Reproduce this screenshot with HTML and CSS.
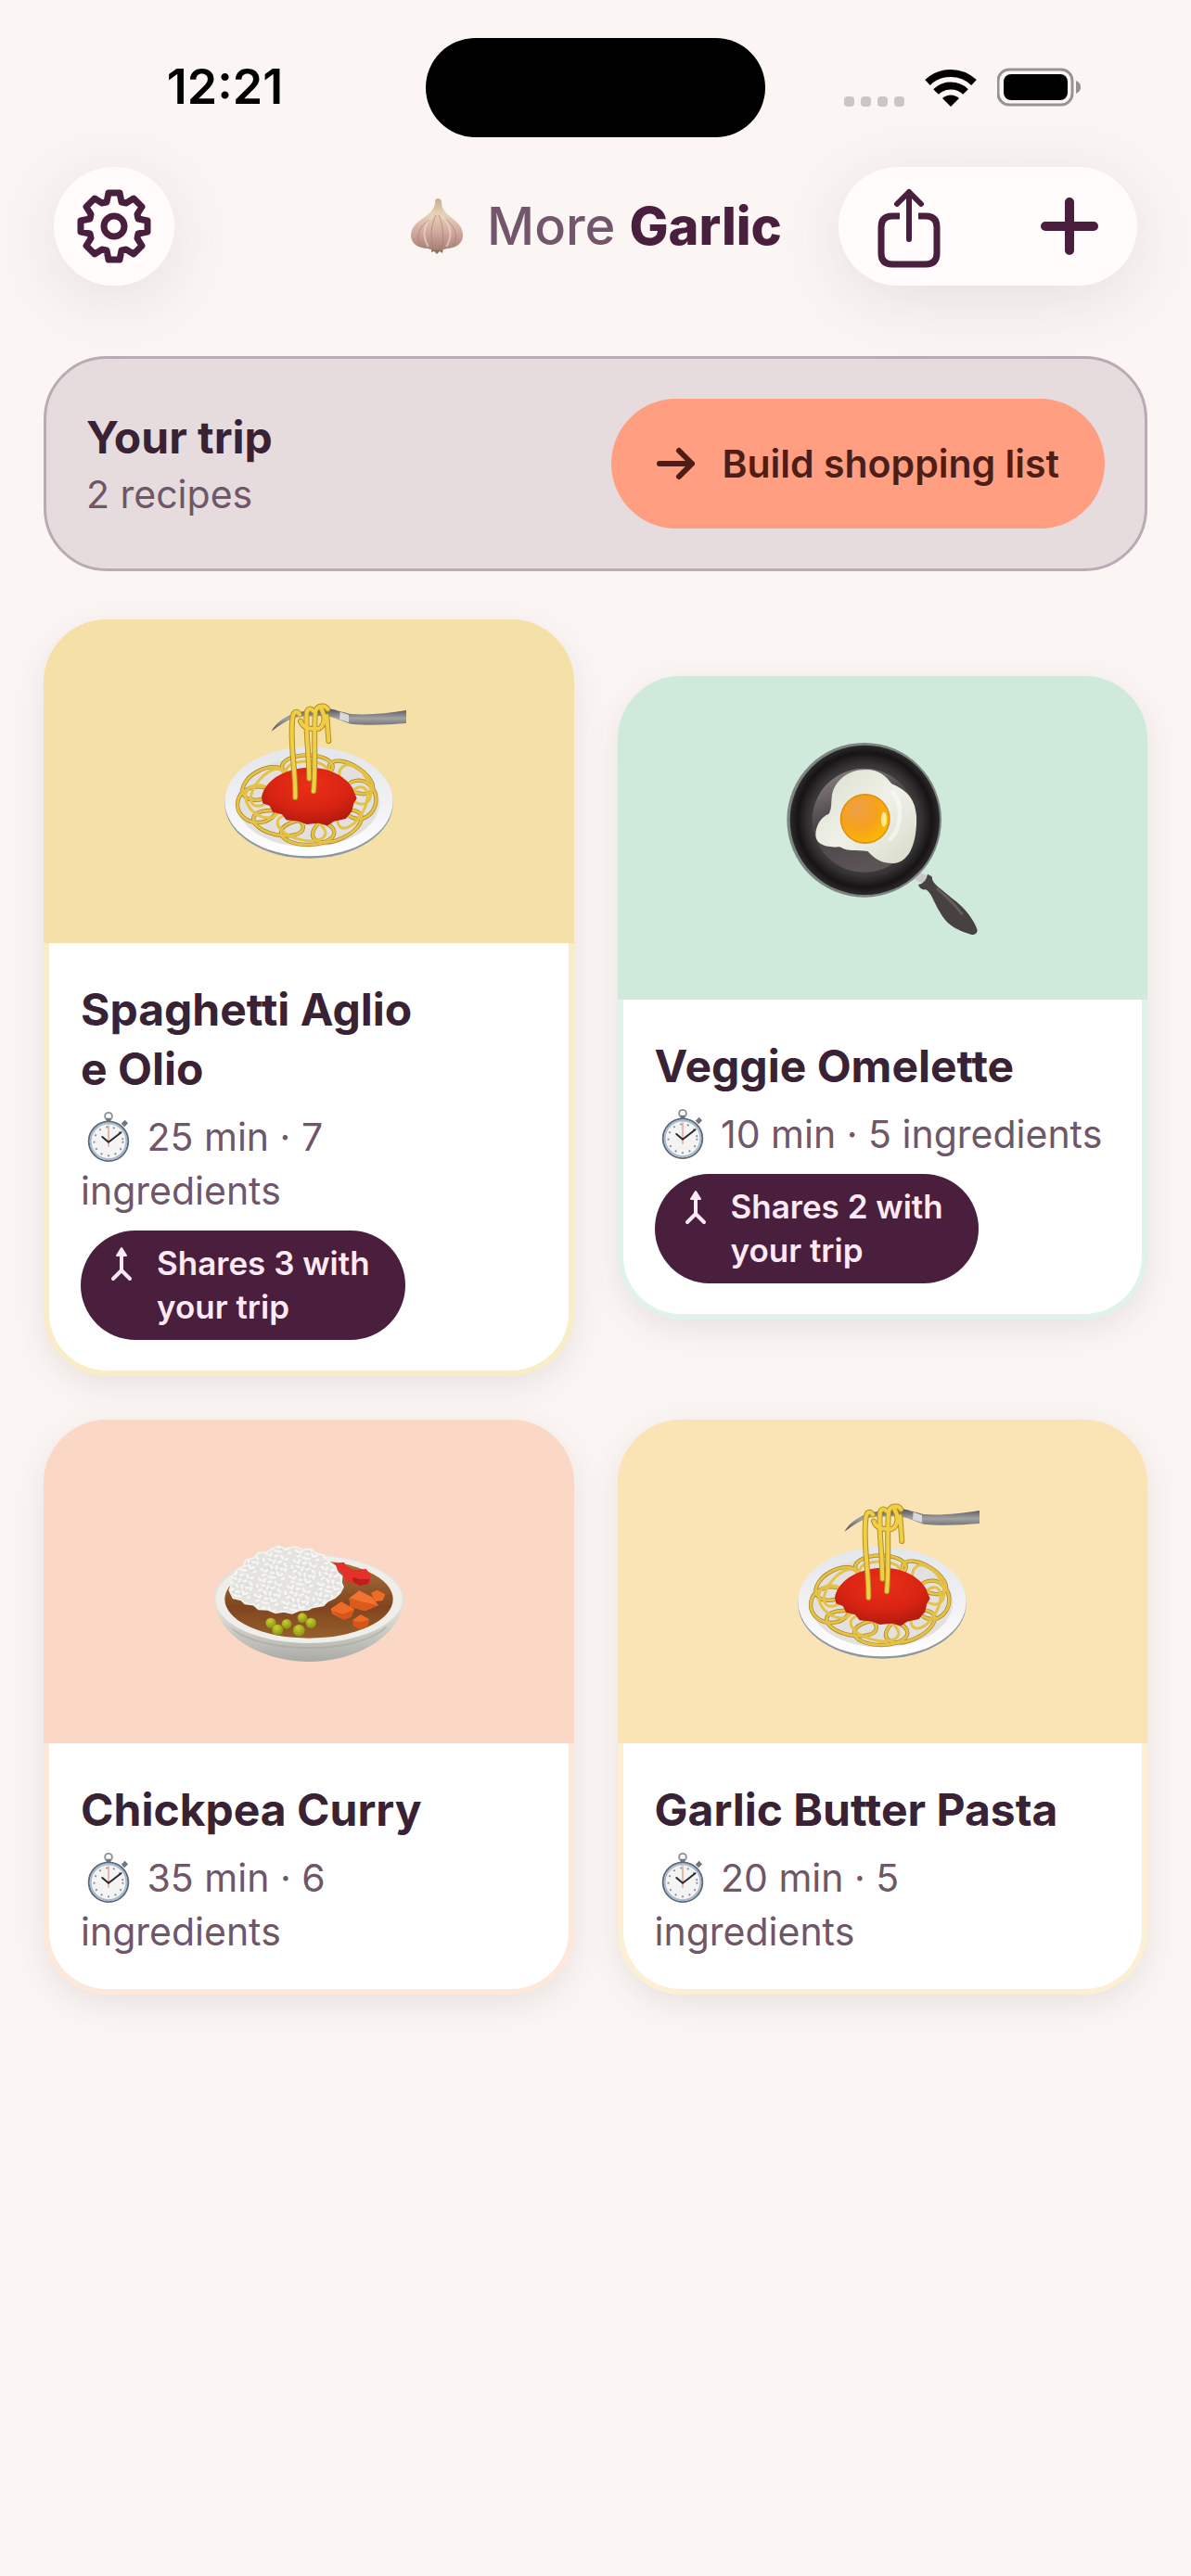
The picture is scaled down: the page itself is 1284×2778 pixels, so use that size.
FILE: index.html
```html
<!DOCTYPE html>
<html lang="en">
<head>
    <meta charset="UTF-8">
    <meta name="viewport" content="width=device-width, initial-scale=1.0">
    <title>More Garlic</title>
    <link rel="stylesheet" href="styles.css">
</head>
<body>

<!-- shared drawings -->
<svg class="defs" aria-hidden="true">
    <defs>
        <linearGradient id="plate" x1="0" y1="0" x2="0" y2="1">
            <stop offset="0" stop-color="#e3e6ea"/>
            <stop offset="0.5" stop-color="#f1f1f4"/>
            <stop offset="1" stop-color="#ffffff"/>
        </linearGradient>
        <radialGradient id="sauce" cx="0.5" cy="0.3" r="0.7">
            <stop offset="0" stop-color="#ea2f17"/>
            <stop offset="0.6" stop-color="#d92413"/>
            <stop offset="1" stop-color="#b01a0e"/>
        </radialGradient>
        <linearGradient id="steel" x1="0" y1="0" x2="0" y2="1">
            <stop offset="0" stop-color="#4b4b4e"/>
            <stop offset="0.45" stop-color="#a3a3a6"/>
            <stop offset="1" stop-color="#4a4a4d"/>
        </linearGradient>
        <radialGradient id="pan">
            <stop offset="0.6" stop-color="#4a4647"/>
            <stop offset="0.75" stop-color="#363334"/>
            <stop offset="0.9" stop-color="#151314"/>
            <stop offset="1" stop-color="#2c2a2b"/>
        </radialGradient>
        <linearGradient id="pan-floor" x1="0" y1="0" x2="0.4" y2="1">
            <stop offset="0" stop-color="#958b8c"/>
            <stop offset="0.5" stop-color="#4a4446"/>
            <stop offset="1" stop-color="#5c5456"/>
        </linearGradient>
        <radialGradient id="yolk" cx="0.35" cy="0.3" r="0.8">
            <stop offset="0" stop-color="#eda04b"/>
            <stop offset="0.5" stop-color="#f6a11c"/>
            <stop offset="1" stop-color="#fcbb00"/>
        </radialGradient>
        <linearGradient id="white" x1="0" y1="0" x2="1" y2="1">
            <stop offset="0" stop-color="#d9dccb"/>
            <stop offset="0.5" stop-color="#f0f2e9"/>
            <stop offset="1" stop-color="#d6dac8"/>
        </linearGradient>
        <linearGradient id="bowl" x1="0" y1="0" x2="0" y2="1">
            <stop offset="0.5" stop-color="#e3e1da"/>
            <stop offset="0.85" stop-color="#bdbdb8"/>
            <stop offset="1" stop-color="#a9a9a5"/>
        </linearGradient>
        <linearGradient id="curry" x1="0" y1="0" x2="0" y2="1">
            <stop offset="0" stop-color="#a9743a"/>
            <stop offset="0.6" stop-color="#80451f"/>
            <stop offset="1" stop-color="#96602c"/>
        </linearGradient>
        <radialGradient id="pea" cx="0.4" cy="0.3" r="0.7">
            <stop offset="0" stop-color="#c9cf2f"/>
            <stop offset="1" stop-color="#8b9212"/>
        </radialGradient>
        <linearGradient id="bulb" x1="0" y1="0" x2="0" y2="1">
            <stop offset="0" stop-color="#c9ad8b"/>
            <stop offset="0.3" stop-color="#e6d3b7"/>
            <stop offset="0.65" stop-color="#d3aa9f"/>
            <stop offset="1" stop-color="#a67f76"/>
        </linearGradient>
        <pattern id="rice" width="94" height="86" patternUnits="userSpaceOnUse" patternTransform="rotate(14)">
            <rect width="94" height="86" fill="#e4e3e0"/>
            <g stroke-width="7" stroke-linecap="round">
                <path stroke="#f8f8f7" d="M8 8l8 5M27 5l-3 10M40 12l9-4M61 5l6 8M82 9l-7 6M6 28l4 8M22 25l9 2M43 24l-2 10M55 29l9-5M76 27l8 6M16 46l8-5M34 44l7 7M53 42l3 9M68 48l9-3M86 44l-3 9M7 62l9 4M28 60l-6 8M41 67l9-2M60 60l5 8M78 62l-8 7M17 80l8-3M36 79l8 2M57 78l-8 2M80 78l6-4"/>
                <path stroke="#cfcdc9" stroke-width="2" d="M17 18l7 3M34 17l5 4M53 15l2 7M70 19l6 2M13 40l-4 6M34 35l-6 3M48 37l5-2M66 36l6 4M27 53l7 3M46 55l5 3M61 54l5-2M77 55l7 2M15 72l7 1M33 71l3 4M53 72l5 1M70 74l6-1"/>
            </g>
        </pattern>

        <symbol id="spaghetti" viewBox="84 51 630 630">
            <ellipse cx="399" cy="436" rx="272" ry="178" fill="#8d98a5"/>
            <ellipse cx="399" cy="430" rx="272" ry="177" fill="url(#plate)"/>
            <ellipse cx="396" cy="432" rx="232" ry="145" fill="#e3e0de"/>
            <g fill="none" stroke="#a9821f" stroke-width="13">
                <ellipse cx="394" cy="318" rx="82" ry="38"/>
                <ellipse cx="255" cy="372" rx="76" ry="45" transform="rotate(-28 255 372)"/>
                <ellipse cx="234" cy="440" rx="66" ry="58"/>
                <ellipse cx="535" cy="352" rx="80" ry="38" transform="rotate(32 535 352)"/>
                <ellipse cx="560" cy="424" rx="56" ry="62"/>
                <ellipse cx="300" cy="500" rx="82" ry="38" transform="rotate(12 300 500)"/>
                <ellipse cx="395" cy="530" rx="86" ry="40"/>
                <ellipse cx="490" cy="510" rx="85" ry="42" transform="rotate(-25 490 510)"/>
            </g>
            <g fill="none" stroke="#e4c147" stroke-width="9">
                <ellipse cx="394" cy="318" rx="82" ry="38"/>
                <ellipse cx="392" cy="330" rx="66" ry="30"/>
                <ellipse cx="255" cy="372" rx="76" ry="45" transform="rotate(-28 255 372)"/>
                <ellipse cx="265" cy="385" rx="72" ry="36" transform="rotate(-50 265 385)"/>
                <ellipse cx="234" cy="440" rx="66" ry="58"/>
                <ellipse cx="250" cy="430" rx="62" ry="45" transform="rotate(40 250 430)"/>
                <ellipse cx="535" cy="352" rx="80" ry="38" transform="rotate(32 535 352)"/>
                <ellipse cx="548" cy="375" rx="70" ry="42" transform="rotate(58 548 375)"/>
                <ellipse cx="560" cy="424" rx="56" ry="62"/>
                <ellipse cx="540" cy="450" rx="74" ry="36" transform="rotate(-60 540 450)"/>
                <ellipse cx="300" cy="500" rx="82" ry="38" transform="rotate(12 300 500)"/>
                <ellipse cx="395" cy="530" rx="86" ry="40"/>
                <ellipse cx="375" cy="515" rx="80" ry="38" transform="rotate(16 375 515)"/>
                <ellipse cx="490" cy="510" rx="85" ry="42" transform="rotate(-25 490 510)"/>
            </g>
            <path fill="url(#sauce)" d="M246 418C252 370 310 322 400 320c70 0 120 32 140 66l14 34-10 16-6 26-20 24-38 8-20 14-30-8-38 4-26-10-40-4-14-18-30-8-10-20-22-8z"/>
            <path fill="url(#steel)" d="M277 203c20-34 52-52 90-62l80-14c20 0 50 12 86 20 60 4 120-2 181-12v42c-50 4-120 8-180 2-30-8-50-22-86-26l-80 2c-40 8-64 30-91 48z"/>
            <path fill="#d9d9dc" d="M500 140l28 10v24l-30-10z"/>
            <g fill="none" stroke="#b58f22" stroke-width="18" stroke-linecap="round">
                <path d="M355 417c2-90-20-180-8-262 4-20 16-18 22-6"/>
                <path d="M400 356c0-80-12-150-8-214 4-14 14-14 20-6"/>
                <path d="M414 397c8-70 0-190 6-258 6-22 32-22 40-8"/>
                <path d="M372 170c10 28 40 26 60 24M438 190c18-20 10-44 0-62M463 234l-6-80"/>
            </g>
            <g fill="none" stroke="#f0cf48" stroke-width="12" stroke-linecap="round">
                <path d="M355 417c2-90-20-180-8-262 4-20 16-18 22-6"/>
                <path d="M400 356c0-80-12-150-8-214 4-14 14-14 20-6"/>
                <path d="M414 397c8-70 0-190 6-258 6-22 32-22 40-8"/>
                <path d="M372 170c10 28 40 26 60 24M438 190c18-20 10-44 0-62M463 234l-6-80"/>
            </g>
        </symbol>

        <symbol id="stopwatch" viewBox="0 0 60 60">
            <circle cx="30" cy="7" r="4" fill="none" stroke="#8d9299" stroke-width="2"/>
            <path stroke="#6f767e" stroke-width="5" d="M30 9v5M46 17l4-4"/>
            <circle cx="30" cy="35" r="22" fill="#f4f4f5" stroke="#5d6976" stroke-width="2"/>
            <circle cx="30" cy="35" r="20" fill="none" stroke="#a9bacd" stroke-width="2"/>
            <circle cx="30" cy="35" r="16" fill="none" stroke="#8d8d90" stroke-width="2" stroke-dasharray="2 6"/>
            <path stroke="#e2755d" stroke-width="1" d="M30 17v24"/>
            <path stroke="#26282b" stroke-width="2" stroke-linecap="round" d="M30 36L44 25M30 36l-7-6"/>
        </symbol>

        <symbol id="merge" viewBox="0 0 24 38">
            <path fill="currentColor" stroke="currentColor" stroke-width="2" stroke-linejoin="round" d="M12 2l5 8H7z"/>
            <path fill="none" stroke="currentColor" stroke-width="4" stroke-linecap="round" stroke-linejoin="round" d="M12 9v17L3 35M12 26l9 9"/>
        </symbol>
    </defs>
</svg>

<div class="status-bar">
    <div class="time">12:21</div>
    <div class="island"></div>
    <div class="status-icons">
        <div class="signal"><i></i><i></i><i></i><i></i></div>
        <svg class="wifi" viewBox="0 0 56 42">
            <g fill="none" stroke="#000" stroke-width="8">
                <path d="M3 16a36 36 0 0 1 50 0"/>
                <path d="M12 26a23 23 0 0 1 32 0"/>
            </g>
            <path d="M28 42l-9-9a13 13 0 0 1 18 0z"/>
        </svg>
        <svg class="battery" viewBox="0 0 90 42">
            <rect x="1" y="2" width="80" height="38" rx="12" fill="none" stroke="#979391" stroke-width="3"/>
            <rect x="7" y="7" width="69" height="28" rx="8"/>
            <path fill="#979391" d="M85 14c7 3 7 11 0 14z"/>
        </svg>
    </div>
</div>

<header class="top-bar">
    <button class="round-btn" aria-label="Settings">
        <svg class="gear" viewBox="-40 -40 80 80">
            <g fill="none" stroke="currentColor" stroke-width="7" stroke-linejoin="round">
                <path d="M-8 -26L-6 -36L6 -36L8 -26L13 -25L21 -30L30 -21L25 -13L26 -8L36 -6L36 6L26 8L25 13L30 21L21 30L13 25L8 26L6 36L-6 36L-8 26L-13 25L-21 30L-30 21L-25 13L-26 8L-36 6L-36 -6L-26 -8L-25 -13L-30 -21L-21 -30L-13 -25Z"/>
                <circle r="11"/>
            </g>
        </svg>
    </button>
    <h1 class="brand">
        <svg class="garlic" viewBox="0 0 60 60">
            <path fill="#8c7464" d="M24 52h13l-1 7-3-2-3 3-3-3-3 1z"/>
            <path fill="url(#bulb)" d="M31 0c2 0 4 1 4 4 0 8 5 12 11 17 8 6 12 11 12 19 0 9-9 14-17 14-6 2-15 2-21 0C11 54 2 49 2 40c0-8 5-13 12-18 7-5 14-10 14-18 0-3 1-4 3-4z"/>
            <path fill="none" stroke="#f1dcd2" stroke-width="2" opacity="0.6" d="M26 18C15 28 14 42 21 52M34 18c12 10 13 24 6 34"/>
            <path fill="none" stroke="#a57a71" stroke-width="1" opacity="0.6" d="M29 18c-6 12-6 26-3 36M32 18c5 12 6 26 3 36M22 23C9 32 7 42 13 51M40 23c11 9 13 19 8 28"/>
        </svg>
        <span>More <strong>Garlic</strong></span>
    </h1>
    <div class="actions">
        <button class="action" aria-label="Share">
            <svg class="share" viewBox="0 0 68 86">
                <g fill="none" stroke="currentColor" stroke-width="7" stroke-linecap="round" stroke-linejoin="round">
                    <path stroke-linecap="butt" d="M24 30h-8Q4 30 4 42v28q0 12 12 12h36q12 0 12-12V42q0-12-12-12h-8"/>
                    <path stroke-width="6" d="M34 55V4M21 17L34 4l13 13"/>
                </g>
            </svg>
        </button>
        <button class="action" aria-label="Add recipe">
            <svg class="plus" viewBox="0 0 62 62">
                <path stroke="currentColor" stroke-width="10" stroke-linecap="round" d="M31 5v52M5 31h52"/>
            </svg>
        </button>
    </div>
</header>

<main>
    <section class="trip">
        <div>
            <h2 class="trip-title">Your trip</h2>
            <p class="trip-count">2 recipes</p>
        </div>
        <button class="build-btn">
            <svg class="arrow" viewBox="0 0 42 36">
                <path fill="none" stroke="currentColor" stroke-width="6" stroke-linecap="round" stroke-linejoin="round" d="M3 18h35M24 4l14 14-14 14"/>
            </svg>
            Build shopping list
        </button>
    </section>

    <section class="recipes">
        <article class="card yellow">
            <div class="cover"><svg class="food"><use href="#spaghetti"/></svg></div>
            <div class="card-body">
                <h3>Spaghetti Aglio<br>e Olio</h3>
                <p class="meta"><svg class="watch"><use href="#stopwatch"/></svg> 25 min · 7<br>ingredients</p>
                <div class="shares"><svg class="merge"><use href="#merge"/></svg><span>Shares 3 with<br>your trip</span></div>
            </div>
        </article>

        <article class="card green">
            <div class="cover">
                <svg class="food" viewBox="138 117 630 630">
                    <path stroke="#c9c9c9" stroke-width="28" d="M562 552l34 16"/>
                    <path fill="#484142" d="M570 582q26-6 30-34l14 8c0 24 24 34 62 68 48 34 74 74 84 102 4 14-12 22-24 16-40-12-74-30-94-68-24-36-28-66-48-76-12 2-20-4-24-16z"/>
                    <path fill="none" stroke="#665d5f" stroke-width="8" stroke-linecap="round" d="M632 596c30 26 58 50 78 80"/>
                    <circle cx="395" cy="373" r="250" fill="#7d8581"/>
                    <circle cx="397" cy="373" r="242" fill="url(#pan)"/>
                    <circle cx="395" cy="374" r="168" fill="url(#pan-floor)"/>
                    <path fill="url(#white)" d="M290 300c4-50 50-90 110-90 46 0 66 22 84 46 46 20 76 46 80 104 2 60-10 140-66 152-50 6-74-20-92-38-40-6-60 4-90-14-40 2-78-6-78-40 0-30 20-60 42-66 10-16 8-34 10-54z"/>
                    <path fill="none" stroke="#f8faf3" stroke-width="14" opacity="0.7" stroke-linecap="round" d="M490 285c30 40 26 110-10 150"/>
                    <circle cx="398" cy="369" r="81" fill="#e08f12"/>
                    <circle cx="398" cy="369" r="76" fill="url(#yolk)"/>
                    <ellipse cx="459" cy="371" rx="9" ry="24" fill="#ffe98a"/>
                </svg>
            </div>
            <div class="card-body">
                <h3>Veggie Omelette</h3>
                <p class="meta"><svg class="watch"><use href="#stopwatch"/></svg> 10 min · 5 ingredients</p>
                <div class="shares"><svg class="merge"><use href="#merge"/></svg><span>Shares 2 with<br>your trip</span></div>
            </div>
        </article>

        <article class="card peach">
            <div class="cover">
                <svg class="food" viewBox="84 -59 630 630">
                    <path fill="url(#bowl)" d="M93 310C96 220 220 168 400 168s304 66 306 140c0 110-140 206-306 206S96 420 93 310z"/>
                    <path fill="none" stroke="#a6a6a2" stroke-width="5" opacity="0.6" d="M150 406c90 80 400 90 500-4"/>
                    <ellipse cx="399" cy="312" rx="302" ry="142" fill="#efeee9"/>
                    <ellipse cx="399" cy="312" rx="272" ry="126" fill="url(#curry)"/>
                    <path fill="#e6302a" d="M478 196l34-4 10 14 22 12 40-4 16 20-4 26-30 10-26-12-22-4-14-30-22-14z"/>
                    <path fill="#b91f1c" d="M540 240l26 8 30-2-6 16-26 6-22-12z"/>
                    <path fill="url(#rice)" stroke="#f3f2f0" stroke-width="5" stroke-linejoin="round" d="M142 282l8-22-4-12 18-30 24-12 6-20 28-8 14-16 26-2 18-12 22-8 20 8 34-6 24 10 26-2 18 14 24 6 14 20 22 14 8 22 14 12-2 20 6 14-10 20-18 16-22 10-14 14-34 6-16 8-28 2-24 10-26-6-28 4-24-10-30-2-16-14-28-4-12-12-26-6-8-16z"/>
                    <path fill="#f0742f" d="M530 308l32-24 40 20 22 28-44 18-48-14z"/>
                    <path fill="#d95a1b" d="M530 308l40 12 54 12-44 18-48-14z"/>
                    <path fill="#ee6a25" d="M470 342l34-22 42 24-10 24-24 10-38-20zM600 292l20-10 26 14-8 20-26 4zM542 378l24-16 28 14-6 24-24 8-22-12z"/>
                    <path fill="#d55618" d="M470 350l40 10 36-14-10 24-24 8zM542 382l24 4 28-8-6 22-24 8-22-12z"/>
                    <g fill="url(#pea)">
                        <circle cx="276" cy="389" r="17"/>
                        <circle cx="327" cy="392" r="16"/>
                        <circle cx="298" cy="411" r="18"/>
                        <circle cx="378" cy="372" r="16"/>
                        <circle cx="406" cy="389" r="17"/>
                        <circle cx="367" cy="413" r="19"/>
                    </g>
                </svg>
            </div>
            <div class="card-body">
                <h3>Chickpea Curry</h3>
                <p class="meta"><svg class="watch"><use href="#stopwatch"/></svg> 35 min · 6<br>ingredients</p>
            </div>
        </article>

        <article class="card amber">
            <div class="cover"><svg class="food"><use href="#spaghetti"/></svg></div>
            <div class="card-body">
                <h3>Garlic Butter Pasta</h3>
                <p class="meta"><svg class="watch"><use href="#stopwatch"/></svg> 20 min · 5<br>ingredients</p>
            </div>
        </article>
    </section>
</main>

</body>
</html>
```

FILE: styles.css
```css
* {
    box-sizing: border-box;
}
body {
    margin: 0;
    min-height: 100vh;
    background-color: #fbf6f4;
    color: #3a2235;
    font-family: Inter, "Liberation Sans", sans-serif;
}
h1, h2, h3, p {
    margin: 0;
}
button {
    border: none;
    padding: 0;
    background: none;
    color: inherit;
    font-family: inherit;
    cursor: pointer;
}
svg {
    display: block;
}
.defs {
    position: absolute;
    width: 0;
    height: 0;
}

/* status bar */
.status-bar {
    display: grid;
    grid-template-columns: 1fr 366px 1fr;
    align-items: center;
    height: 180px;
    padding: 8px 0 0;
}
.time {
    padding-left: 26px;
    text-align: center;
    font-size: 52px;
    font-weight: 600;
    line-height: 60px;
    color: #000;
}
.island {
    height: 107px;
    border-radius: 54px;
    background-color: #000;
}
.status-icons {
    display: flex;
    align-items: center;
    justify-content: flex-end;
    gap: 22px;
    padding-right: 119px;
}
.signal {
    display: flex;
    align-self: flex-end;
    gap: 7px;
}
.signal i {
    width: 11px;
    height: 11px;
    border-radius: 4px;
    background-color: #cac6c4;
}
.wifi {
    width: 56px;
    height: 42px;
}
.battery {
    width: 90px;
    height: 42px;
}

/* top bar */
.top-bar {
    display: grid;
    grid-template-columns: 1fr auto 1fr;
    align-items: center;
    padding: 0 58px;
    color: #4a1e3d;
}
.round-btn,
.actions {
    display: flex;
    align-items: center;
    height: 128px;
    border-radius: 64px;
    background-color: #fffcfb;
    box-shadow: 0 14px 80px rgba(70, 50, 60, 0.12);
}
.round-btn {
    justify-content: center;
    width: 130px;
}
.gear {
    width: 80px;
    height: 80px;
}
.brand {
    display: flex;
    align-items: center;
    gap: 24px;
    font-size: 56px;
    font-weight: 500;
    line-height: 70px;
    color: #73566b;
}
.brand strong {
    font-weight: 800;
    color: #4a1e3d;
}
.garlic {
    width: 60px;
    height: 60px;
}
.actions {
    justify-self: end;
    justify-content: space-between;
    width: 322px;
    padding: 0 42px;
}
.share {
    width: 68px;
    height: 86px;
    margin-top: 4px;
}
.plus {
    width: 62px;
    height: 62px;
}

main {
    padding: 76px 47px;
}

/* trip banner */
.trip {
    display: flex;
    align-items: center;
    justify-content: space-between;
    padding: 43px;
    border: 3px solid #baaab3;
    border-radius: 68px;
    background-color: #e6dcde;
}
.trip-title {
    padding-top: 2px;
    font-size: 48px;
    font-weight: 700;
    line-height: 64px;
}
.trip-count {
    font-size: 41px;
    line-height: 58px;
    color: #6f5668;
}
.build-btn {
    display: flex;
    align-items: center;
    gap: 28px;
    height: 140px;
    padding: 0 49px;
    border-radius: 70px;
    background-color: #ff9e80;
    color: #4e1d15;
    font-size: 41px;
    font-weight: 600;
}
.arrow {
    width: 42px;
    height: 36px;
}

/* recipe grid */
.recipes {
    display: grid;
    grid-template-columns: 1fr 1fr;
    align-items: center;
    gap: 47px;
    margin-top: 52px;
}
.card {
    overflow: hidden;
    border-radius: 68px;
    box-shadow: 0 10px 36px rgba(70, 40, 60, 0.1);
}
.cover {
    display: flex;
    align-items: center;
    justify-content: center;
    height: 349px;
}
.food {
    width: 210px;
    height: 210px;
}
.card-body {
    padding: 40px 0 33px 34px;
    border: 6px solid;
    border-top: none;
    border-radius: 0 0 68px 68px;
    background-color: #fff;
}
.card h3 {
    font-size: 48px;
    font-weight: 700;
    line-height: 64px;
}
.meta {
    margin-top: 12px;
    font-size: 41px;
    line-height: 58px;
    color: #6f5668;
    white-space: nowrap;
}
.watch {
    display: inline-block;
    width: 60px;
    height: 58px;
    vertical-align: bottom;
}
.shares {
    display: flex;
    gap: 26px;
    width: fit-content;
    margin-top: 14px;
    padding: 12px 38px 12px 32px;
    border-radius: 60px;
    background-color: #4a1e3d;
    color: #fdeaf4;
    font-size: 35px;
    font-weight: 600;
    line-height: 47px;
}
.merge {
    width: 24px;
    height: 38px;
    margin-top: 5px;
}

.yellow .cover { background-color: #f5e0a7; }
.yellow { background-color: #f9ecc9; }
.yellow .card-body { border-color: #f9ecc9; }
.green .cover { background-color: #cfeadb; }
.green { background-color: #e0f2e9; }
.green .card-body { border-color: #e0f2e9; }
.peach .cover { background-color: #fbd8c5; }
.peach { background-color: #fde8dc; }
.peach .card-body { border-color: #fde8dc; }
.amber .cover { background-color: #fae4b5; }
.amber { background-color: #fcefd3; }
.amber .card-body { border-color: #fcefd3; }
```
